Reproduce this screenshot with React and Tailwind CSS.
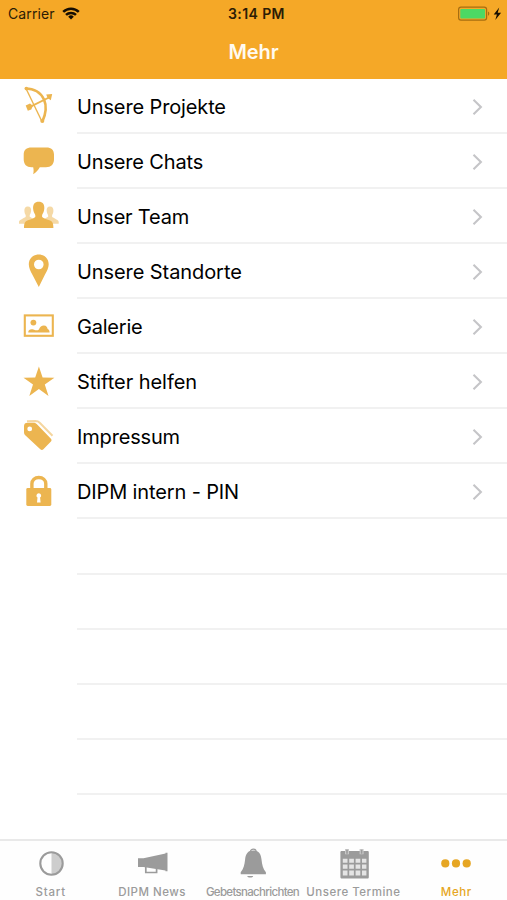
const items = [
  { label: 'Unsere Projekte', icon: BowIcon, spacing: 'tracking-[-0.13px]' },
  { label: 'Unsere Chats', icon: ChatIcon, spacing: 'tracking-[-0.15px]' },
  { label: 'Unser Team', icon: TeamIcon, spacing: 'tracking-[-0.2px]' },
  { label: 'Unsere Standorte', icon: PinIcon, spacing: 'tracking-[-0.08px]' },
  { label: 'Galerie', icon: GalleryIcon, spacing: 'tracking-[-0.22px]' },
  { label: 'Stifter helfen', icon: StarIcon, spacing: 'tracking-[-0.05px]' },
  { label: 'Impressum', icon: TagIcon, spacing: 'tracking-[-0.17px]' },
  { label: 'DIPM intern - PIN', icon: LockIcon, spacing: 'tracking-[-0.13px]' },
]

const tabs = [
  { label: 'Start', icon: StartIcon, style: 'tracking-[0.75px]' },
  { label: 'DIPM News', icon: MegaphoneIcon, style: 'tracking-[0.5px]' },
  { label: 'Gebetsnachrichten', icon: BellIcon, style: 'tracking-[-0.68px] -ml-[2px]' },
  { label: 'Unsere Termine', icon: CalendarIcon, style: 'tracking-[0.5px] -ml-[3px]' },
  { label: 'Mehr', icon: DotsIcon, style: 'tracking-[0.6px]', active: true },
]

function RowSvg({ children }) {
  return (
    <svg viewBox="0 0 40 55" className="w-10 h-[55px] ml-[19px] mr-[18px] shrink-0 text-[#ecb550]" fill="currentColor">
      {children}
    </svg>
  )
}

function BowIcon() {
  return (
    <RowSvg>
      <g fill="none" stroke="currentColor">
        <path d="M7 9.5 23.2 43" strokeWidth="1.4" />
        <path d="M6.5 9.5C15 9.5 21.5 13.3 25 20.5c2.9 6.5 2 14-1.7 22.3" strokeWidth="2.6" />
        <path d="M10 28.3 31 18" strokeWidth="1.9" />
      </g>
      <path d="m27.2 15.6 6-.6-1.4 6.3-3.2-2.2z" />
      <path d="m6.7 26.4 4.3-1.8 2.9 2.2-1.6 3.8-3.5 1.2z" />
      <circle cx="7.3" cy="9.6" r="1.8" />
      <circle cx="23.3" cy="42" r="2" />
    </RowSvg>
  )
}

function ChatIcon() {
  return (
    <RowSvg>
      <path d="M12.5 13.6h14.8c5 0 7.7 2.6 7.7 7v4.7c0 5-3 8-8 8h-6.2c-1.5 2.7-3.5 5.2-6.6 6.9.6-2.6.5-4.6 0-6.9h-1.7c-5 0-7.8-3-7.8-8v-4.7c0-4.4 2.8-7 7.8-7z" />
    </RowSvg>
  )
}

function TeamIcon() {
  return (
    <RowSvg>
      <g opacity=".5">
        <path d="M8.8 17.6c2.5 0 3.6 1.9 3.3 4.5-.2 2-.9 3.1-1.4 4.1v1.6l4 2.2v4.7H0v-1.8c0-1.8 2.5-2.6 6.7-5v-1.7c-.6-1-1.2-2.2-1.3-4.1-.2-2.6.9-4.5 3.4-4.5z" />
        <path d="M31 17.6c-2.5 0-3.6 1.9-3.3 4.5.2 2 .9 3.1 1.4 4.1v1.6l-4 2.2v4.7h14.6v-1.8c0-1.8-2.4-2.6-6.6-5v-1.7c.6-1 1.2-2.2 1.3-4.1.2-2.6-.9-4.5-3.4-4.5z" />
      </g>
      <path d="M19.7 12.8c4 0 5.9 2.7 5.6 6.8-.2 3.1-1.2 4.7-2.2 6.3v2.2c1.5 1.6 5.2 2.3 8 3.5 2.6 1.2 3.3 3.2 3.3 7.5H5c0-4.3.8-6.3 3.3-7.5 2.9-1.2 6.5-1.9 8-3.5v-2.2c-1-1.6-2-3.2-2.2-6.3-.2-4.1 1.6-6.8 5.6-6.8z" />
    </RowSvg>
  )
}

function PinIcon() {
  return (
    <RowSvg>
      <path fillRule="evenodd" d="M19.8 10.5c5.7 0 9.9 4.2 9.9 9.7 0 3.5-1.8 6.8-3.7 10.3L19.8 43l-6.5-12.5C11.5 27 9.8 23.7 9.8 20.2c0-5.5 4.3-9.7 10-9.7zm0 5.2a4.8 4.8 0 1 0 0 9.6 4.8 4.8 0 0 0 0-9.6z" />
    </RowSvg>
  )
}

function GalleryIcon() {
  return (
    <RowSvg>
      <rect x="5.8" y="16.4" width="28" height="20.4" fill="none" stroke="currentColor" strokeWidth="2.1" />
      <circle cx="14.4" cy="23.6" r="2.9" />
      <path d="M9.2 33.4c0-2.6 2.5-3.5 5.2-2.8l2.1.6c1.4.3 2.4 0 3.4-.8 1-2.2 2.6-3.9 5-3.9 2.6 0 3.5 1.9 3.7 3.5 1.4.2 2 1.7 2 3.4z" />
    </RowSvg>
  )
}

function StarIcon() {
  return (
    <RowSvg>
      <path d="m19.9 12.4 3.7 11.2 11.8.1-9.6 6.9 3.7 11.3-9.6-7-9.6 7L14 30.6l-9.5-6.9 11.7-.1z" />
    </RowSvg>
  )
}

function TagIcon() {
  return (
    <RowSvg>
      <path d="M8 12.2 16.5 12c2 0 3 .5 4.2 1.7l12.8 13" fill="none" stroke="currentColor" strokeWidth="2" opacity=".55" />
      <path fillRule="evenodd" d="M8.5 13.7h5.7c1.6 0 2.5.4 3.5 1.4l14 14.3c1.1 1.1 1.1 2.2 0 3.3l-7.3 7.5c-1 1-2 1-3.1 0L6.5 26.5C5.4 25.5 5 24.7 5 23v-5.7c0-2.5 1.3-3.6 3.5-3.6zm2.2 3.8a2.4 2.4 0 1 0 0 4.8 2.4 2.4 0 0 0 0-4.8z" />
    </RowSvg>
  )
}

function LockIcon() {
  return (
    <RowSvg>
      <path d="M12.9 25v-5.2c0-3.9 2.9-6.3 6.9-6.3s7 2.4 7 6.3V25" fill="none" stroke="currentColor" strokeWidth="3.4" />
      <rect x="7.3" y="24" width="25" height="18" rx="1.4" />
      <path d="M19.8 29.2a2.4 2.4 0 0 0-1.3 4.4l-.5 4.8h3.6l-.5-4.8a2.4 2.4 0 0 0-1.3-4.4z" fill="#fff" />
    </RowSvg>
  )
}

function TabSvg({ children }) {
  return (
    <svg viewBox="0 0 40 40" className="w-10 h-10 mt-px shrink-0" fill="currentColor">
      {children}
    </svg>
  )
}

function StartIcon() {
  return (
    <TabSvg>
      <path d="M20.5 10.5a11 11 0 0 1 0 22z" opacity=".5" />
      <circle cx="20.5" cy="21.5" r="11.2" fill="none" stroke="currentColor" strokeWidth="2.1" />
    </TabSvg>
  )
}

function MegaphoneIcon() {
  return (
    <TabSvg>
      <path d="M6 16.2h5.5L33.5 11.4v-.6h2v18.4h-2v-.8L11.5 25H6z" />
      <path d="M13.8 24.5v6h10.8v-4" fill="none" stroke="currentColor" strokeWidth="1.7" />
    </TabSvg>
  )
}

function BellIcon() {
  return (
    <TabSvg>
      <path d="M20.3 8.6c5.5 0 7.6 3.4 8.2 9 .6 5.3 1.4 9.3 4.4 12.6v2H7.7v-2c3-3.3 3.8-7.3 4.4-12.6.6-5.6 2.7-9 8.2-9z" />
      <path d="M17.5 9.6c0-3.3 5.6-3.3 5.6 0" fill="none" stroke="currentColor" strokeWidth="1.2" />
      <path d="M14.2 33.9h6c-.4 2-5.6 2-6 0z" />
    </TabSvg>
  )
}

function CalendarIcon() {
  return (
    <TabSvg>
      <g transform="translate(-1 -.8)">
        <path d="M6.4 11.2c0-.8.5-1.3 1.3-1.3h25.8c.8 0 1.3.5 1.3 1.3v24.6c0 1-.5 1.5-1.5 1.5H8c-1 0-1.6-.5-1.6-1.5z" />
        <path d="M8.8 17.5h4.7v4.1H8.8zM15.2 17.5h4.7v4.1h-4.7zM21.6 17.5h4.7v4.1h-4.7zM28 17.5h4.4v4.1H28zM8.8 23.2h4.7v4.4H8.8zM15.2 23.2h4.7v4.4h-4.7zM21.6 23.2h4.7v4.4h-4.7zM28 23.2h4.4v4.4H28zM8.8 29.3h4.7v4.9H8.8zM15.2 29.3h4.7v4.9h-4.7zM21.6 29.3h4.7v4.9h-4.7zM28 29.3h4.4v4.9H28z" fill="#e4e4e4" />
        <path d="M11 7.8h4v5.2h-4zM25.6 7.8h4v5.2h-4z" fill="#c9c9c9" />
        <path d="M12.2 8.5h1.6v4h-1.6zM26.8 8.5h1.6v4h-1.6z" />
      </g>
    </TabSvg>
  )
}

function DotsIcon() {
  return (
    <TabSvg>
      <circle cx="9.3" cy="21.4" r="4.1" />
      <circle cx="20" cy="21.4" r="4.1" />
      <circle cx="30.7" cy="21.4" r="4.1" />
    </TabSvg>
  )
}

function StatusBar() {
  return (
    <div className="grid grid-cols-3 items-center h-7 pl-2 pr-[5px] text-[#2b1c05]">
      <div className="flex items-center gap-[7px]">
        <span className="text-[14px] leading-none tracking-[0.1px]">Carrier</span>
        <svg viewBox="0 0 18 13" className="w-[18px] h-[13px] -mt-px" fill="none" stroke="#160e02" strokeWidth="2.5">
          <path d="M1.2 4.8a11.2 11.2 0 0 1 15.6 0" />
          <path d="M4 7.9a7.2 7.2 0 0 1 10 0" />
          <path d="m9 12.5-2.8-2.8a4 4 0 0 1 5.6 0z" fill="#160e02" stroke="none" />
        </svg>
      </div>
      <span className="text-center text-[14px] leading-[14px] font-semibold tracking-[0.4px] pl-[3px]">3:14 PM</span>
      <svg viewBox="0 0 44 16" className="w-11 h-4 justify-self-end">
        <rect x=".6" y="1.2" width="28" height="13" rx="2.4" fill="none" stroke="#a66d11" strokeWidth="1.2" />
        <rect x="2.3" y="2.9" width="24.8" height="9.7" rx="1" fill="#4cd964" />
        <path d="M30 5.5c1.8.7 1.8 3.6 0 4.3z" fill="#a66d11" />
        <path d="M41.2 1.5 35.7 8.4h3.2l-1.6 5.7 5.8-7.4h-3.4z" fill="#160e02" />
      </svg>
    </div>
  )
}

function App() {
  return (
    <div className="w-full h-[900px] flex flex-col overflow-hidden bg-white text-black font-['Inter','Liberation_Sans',sans-serif]">
      <header className="h-[79px] shrink-0 bg-[#f5a827]">
        <StatusBar />
        <h1 className="text-center text-[20px] leading-6 pt-3 font-semibold text-[#fffaf0] tracking-[-0.1px]">Mehr</h1>
      </header>

      <main className="flex-1 overflow-hidden">
        {items.map(({ label, icon: Icon, spacing }) => (
          <div key={label} className="flex h-[55px]">
            <Icon />
            <div className="flex flex-1 items-center justify-between border-b-2 border-[#f1f1f1] pr-6 pt-[2px]">
              <span className={`text-[20px] leading-6 whitespace-nowrap ${spacing}`}>{label}</span>
              <svg viewBox="0 0 11 18" className="w-[11px] h-[18px]" fill="none" stroke="#c5c5c8" strokeWidth="2.1">
                <path d="m1.5 1.8 7.4 7.2-7.4 7.2" />
              </svg>
            </div>
          </div>
        ))}
        <div className="pt-px">
          {[0, 1, 2, 3, 4].map((n) => (
            <div key={n} className="h-[55px] ml-[77px] border-b-2 border-[#f1f1f1]" />
          ))}
        </div>
      </main>

      <nav className="grid grid-cols-5 h-[61px] shrink-0 border-t-2 border-[#e9e9e9] bg-[#fefefe]">
        {tabs.map(({ label, icon: Icon, style, active }) => (
          <div key={label} className={`flex flex-col items-center ${active ? 'text-[#e6a623]' : 'text-[#9b9b9b]'}`}>
            <Icon />
            <span className={`text-[11.5px] leading-[14px] mt-[3px] font-medium whitespace-nowrap ${style}`}>{label}</span>
          </div>
        ))}
      </nav>
    </div>
  )
}

export default App
